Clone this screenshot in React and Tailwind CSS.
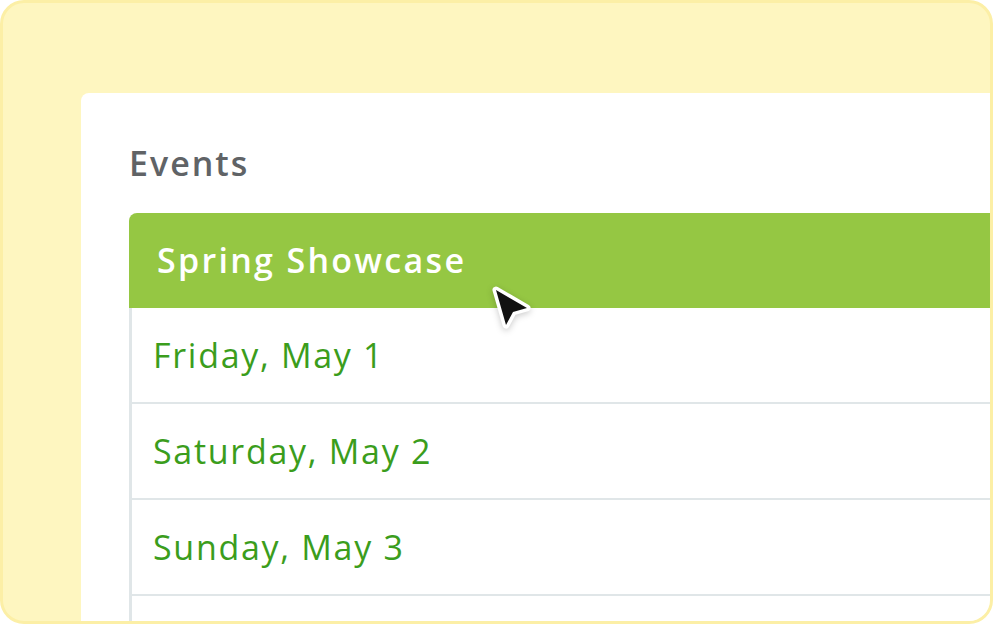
import React from "react";

const days = ["Friday, May 1", "Saturday, May 2", "Sunday, May 3", ""];

function Cursor() {
  return (
    <svg
      className="absolute left-[479px] top-[274px] drop-shadow-[0_2px_3px_rgba(0,0,0,0.2)]"
      width="60"
      height="66"
      viewBox="0 0 60 66"
    >
      <path
        d="M14 13 L45 31 L31 35 L24 48 Z"
        fill="#111"
        stroke="#fff"
        strokeWidth="7"
        strokeLinejoin="round"
        paintOrder="stroke"
      />
    </svg>
  );
}

export default function App() {
  return (
    <div className="w-[993px] h-[624px] overflow-hidden bg-white" style={{ fontFamily: "'Open Sans', 'Noto Sans', sans-serif" }}>
      <div className="relative w-full h-full rounded-[24px] border-[3px] border-[#fcefa6] bg-[#fef6c0] pt-[90px] pl-[78px] overflow-hidden">
        <div className="h-full bg-white rounded-tl-[8px] pl-[48px] pt-[48px]">
          <h1 className="text-[34px] leading-[44px] font-semibold tracking-[2px] text-[#606366]">Events</h1>
          <div className="mt-[28px]">
            <div className="h-[95px] flex items-center pl-[28px] bg-[#95c743] rounded-tl-[8px] text-white text-[34px] font-semibold tracking-[2.3px]">
              Spring Showcase
            </div>
            {days.map((d, i) => (
              <div
                key={i}
                className="h-[96px] flex items-center pl-[21px] pt-[1px] border-l-[3px] border-b-[2px] border-[#e0e6e8] text-[#3b9d1c] text-[34px] tracking-[1.7px]"
              >
                {d}
              </div>
            ))}
          </div>
        </div>
        <Cursor />
      </div>
    </div>
  );
}
